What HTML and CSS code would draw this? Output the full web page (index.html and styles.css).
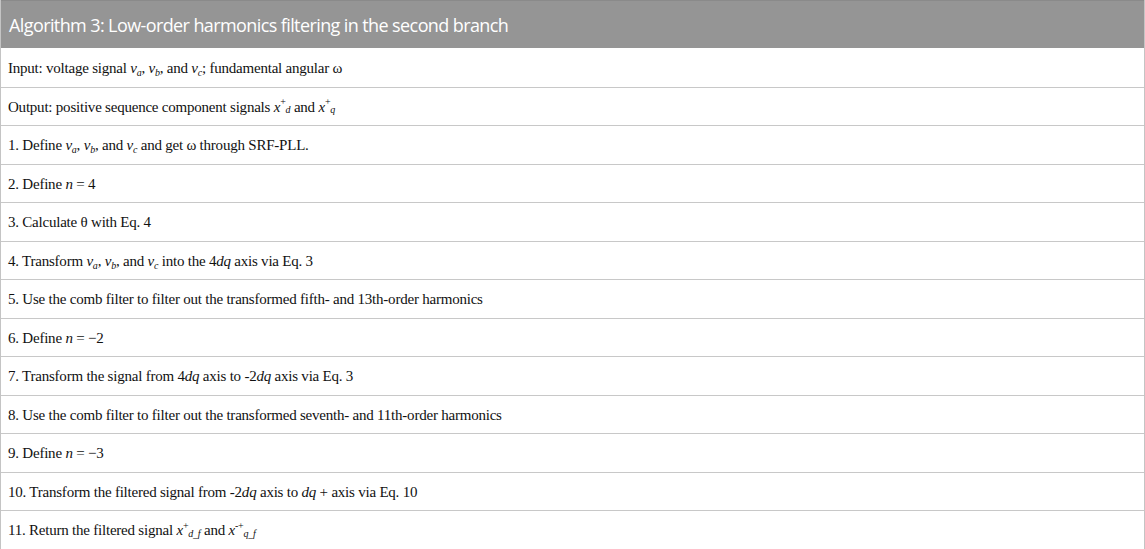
FILE: index.html
```html
<!DOCTYPE html>
<html>
<head>
<meta charset="utf-8">
<link rel="stylesheet" href="styles.css">
</head>
<body>
<div class="algo">
  <div class="head">Algorithm 3: Low-order harmonics filtering in the second branch</div>
  <div class="row">Input: voltage signal <i>v<sub>a</sub></i>, <i>v<sub>b</sub></i>, and <i>v<sub>c</sub></i>; fundamental angular ω</div>
  <div class="row">Output: positive sequence component signals <i>x</i><sup>+</sup><sub><i>d</i></sub> and <i>x</i><sup>+</sup><sub><i>q</i></sub></div>
  <div class="row">1. Define <i>v<sub>a</sub></i>, <i>v<sub>b</sub></i>, and <i>v<sub>c</sub></i> and get ω through SRF-PLL.</div>
  <div class="row">2. Define <i>n</i> = 4</div>
  <div class="row">3. Calculate θ with Eq. 4</div>
  <div class="row">4. Transform <i>v<sub>a</sub></i>, <i>v<sub>b</sub></i>, and <i>v<sub>c</sub></i> into the 4<i>dq</i> axis via Eq. 3</div>
  <div class="row">5. Use the comb filter to filter out the transformed fifth- and 13th-order harmonics</div>
  <div class="row">6. Define <i>n</i> = −2</div>
  <div class="row">7. Transform the signal from 4<i>dq</i> axis to -2<i>dq</i> axis via Eq. 3</div>
  <div class="row">8. Use the comb filter to filter out the transformed seventh- and 11th-order harmonics</div>
  <div class="row">9. Define <i>n</i> = −3</div>
  <div class="row">10. Transform the filtered signal from -2<i>dq</i> axis to <i>dq</i> + axis via Eq. 10</div>
  <div class="row">11. Return the filtered signal <i>x</i><sup>+</sup><sub><i>d_f</i></sub> and <i>x</i><sup>-+</sup><sub><i>q_f</i></sub></div>
</div>
</body>
</html>
```
FILE: styles.css
```css
html, body {
  margin: 0;
  padding: 0;
  background: #ffffff;
}
.algo {
  width: 1145px;
  box-sizing: border-box;
  border-left: 1px solid #c4c4c4;
  border-right: 1px solid #c4c4c4;
  border-bottom: 1px solid #c4c4c4;
  display: flex;
  flex-direction: column;
}
.head {
  height: 48px;
  box-sizing: border-box;
  background: #959595;
  border-top: 1px solid #8a8a8a;
  color: #ffffff;
  font-family: "Open Sans", sans-serif;
  font-size: 18px;
  letter-spacing: -0.6px;
  padding: 1px 8px 0;
  display: flex;
  align-items: center;
}
.row {
  height: 38.5px;
  box-sizing: border-box;
  border-top: 1px solid #c8c8c8;
  font-family: "Liberation Serif", serif;
  font-size: 15px;
  letter-spacing: -0.22px;
  color: #111111;
  padding: 2px 7px 0;
  display: flex;
  align-items: center;
  white-space: pre;
}
.row:nth-child(2) {
  border-top: none;
}
sub, sup {
  font-size: 10px;
  line-height: 0;
  position: relative;
  vertical-align: baseline;
}
sub { top: 3px; }
sup { top: -5px; }
```
